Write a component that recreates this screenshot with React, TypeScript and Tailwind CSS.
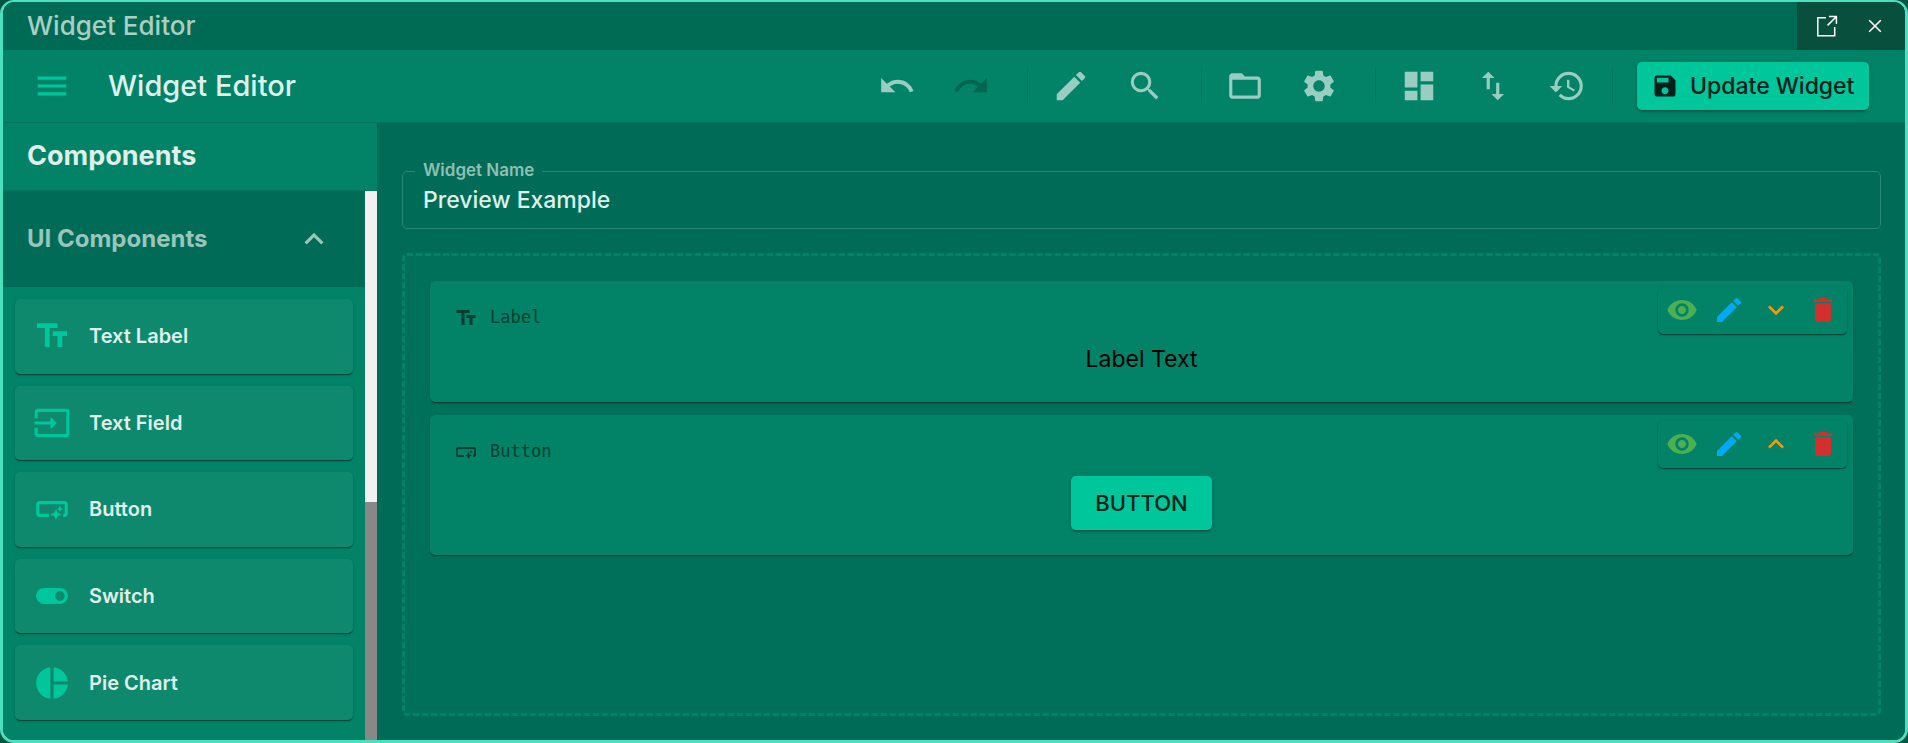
import type { ReactNode } from "react";
import type { IconType } from "react-icons";
import {
  MdDashboard,
  MdDelete,
  MdEdit,
  MdExpandLess,
  MdExpandMore,
  MdFolderOpen,
  MdHistory,
  MdInput,
  MdMenu,
  MdPieChart,
  MdRedo,
  MdSave,
  MdSearch,
  MdSettings,
  MdSmartButton,
  MdSwapVert,
  MdTextFields,
  MdToggleOn,
  MdUndo,
  MdVisibility,
} from "react-icons/md";

const raised = "shadow-[0_2px_1px_-1px_rgba(0,0,0,0.3),0_1px_1px_rgba(0,0,0,0.2),0_1px_3px_rgba(0,0,0,0.16)]";

const palette: { label: string; icon: IconType }[] = [
  { label: "Text Label", icon: MdTextFields },
  { label: "Text Field", icon: MdInput },
  { label: "Button", icon: MdSmartButton },
  { label: "Switch", icon: MdToggleOn },
  { label: "Pie Chart", icon: MdPieChart },
];

function TitleBar() {
  return (
    <header className="flex h-12 shrink-0 items-center justify-between bg-[#006b54] pl-6">
      <span className="text-[26px] leading-8 font-medium text-[#a9cfc3]">Widget Editor</span>
      <div className="flex h-full items-center gap-3 bg-[#084f3d] pr-3 pl-3">
        <button type="button" aria-label="Open in new window" className="flex size-9 items-center justify-center text-white">
          <svg viewBox="0 0 22 22" className="size-[22px]" fill="none" stroke="currentColor" strokeWidth="1.5">
            <path d="M10 2.8H1.8V20.8H18.7V12" />
            <path d="M13 1.6H20.4V9M20.2 1.8L11.6 10.4" />
          </svg>
        </button>
        <button type="button" aria-label="Close" className="flex size-9 items-center justify-center text-white">
          <svg viewBox="0 0 14 14" className="size-[14px]" fill="none" stroke="currentColor" strokeWidth="1.6">
            <path d="M1.2 1.2L12.8 12.8M12.8 1.2L1.2 12.8" />
          </svg>
        </button>
      </div>
    </header>
  );
}

function ToolButton({ label, icon: Icon, disabled = false }: { label: string; icon: IconType; disabled?: boolean }) {
  return (
    <button
      type="button"
      aria-label={label}
      disabled={disabled}
      className="flex size-[62px] items-center justify-center text-[#99cdc1] disabled:text-[#01664f]"
    >
      <Icon className="size-[38px]" />
    </button>
  );
}

function Toolbar() {
  return (
    <div className="flex h-[73px] shrink-0 items-center border-b border-[#01755d] bg-[#028368] pr-9 pl-[21px]">
      <button type="button" aria-label="Menu" className="flex size-[56px] items-center justify-center text-[#00c69c]">
        <MdMenu className="size-[38px]" />
      </button>
      <h1 className="ml-7 flex-1 text-[29px] leading-9 font-medium text-[#dff0eb]">Widget Editor</h1>
      <div className="flex items-center gap-3">
        <ToolButton label="Undo" icon={MdUndo} />
        <ToolButton label="Redo" icon={MdRedo} disabled />
        <span className="ml-[13px] h-9 w-px bg-[#01755d]" />
        <ToolButton label="Edit" icon={MdEdit} />
        <ToolButton label="Search" icon={MdSearch} />
        <span className="ml-[13px] h-9 w-px bg-[#01755d]" />
        <ToolButton label="Open" icon={MdFolderOpen} />
        <ToolButton label="Settings" icon={MdSettings} />
        <span className="ml-[13px] h-9 w-px bg-[#01755d]" />
        <ToolButton label="Dashboard" icon={MdDashboard} />
        <ToolButton label="Import and export" icon={MdSwapVert} />
        <ToolButton label="History" icon={MdHistory} />
        <span className="mr-3 ml-0.5 h-9 w-px bg-[#01755d]" />
        <button
          type="button"
          className="flex h-12 w-[232px] items-center gap-[11px] rounded-[5px] bg-[#00c69c] pl-[14px] text-[23px] font-medium whitespace-nowrap text-[#04201a] shadow-[0_3px_1px_-2px_rgba(0,0,0,0.2),0_2px_2px_rgba(0,0,0,0.14),0_1px_5px_rgba(0,0,0,0.12)]"
        >
          <MdSave className="size-7 shrink-0" />
          Update Widget
        </button>
      </div>
    </div>
  );
}

function Sidebar() {
  return (
    <aside className="flex w-[374px] shrink-0 flex-col bg-[#028368]">
      <h2 className="flex h-[68px] shrink-0 items-center border-b border-[#01755d] pl-6 text-[27px] font-bold text-[#dff0eb]">
        Components
      </h2>
      <div className="flex min-h-0 flex-1">
        <div className="min-w-0 flex-1 overflow-hidden">
          <button
            type="button"
            aria-expanded="true"
            className="flex h-24 w-full items-center justify-between bg-[#006c57] pr-8 pl-6 text-[24px] font-bold text-[#99c5ba]"
          >
            UI Components
            <MdExpandLess className="size-[38px]" />
          </button>
          <ul className="grid min-h-[445px] auto-rows-fr gap-3 p-3">
            {palette.map(({ label, icon: Icon }) => (
              <li
                key={label}
                className={`flex items-center gap-[18px] rounded-[5px] bg-[#0f896e] pl-[18px] ${raised}`}
              >
                <Icon className="size-[38px] text-[#00c69c]" />
                <span className="text-[20px] font-semibold text-[#dff0eb]">{label}</span>
              </li>
            ))}
          </ul>
        </div>
        <div className="flex w-3 flex-col bg-[#f1f1f1]">
          <div className="flex-[311]" />
          <div className="flex-[238] bg-[#888888]" />
        </div>
      </div>
    </aside>
  );
}

function CanvasItem({
  name,
  icon: Icon,
  move,
  children,
}: {
  name: string;
  icon: IconType;
  move: "up" | "down";
  children: ReactNode;
}) {
  const MoveIcon = move === "up" ? MdExpandLess : MdExpandMore;
  return (
    <section className={`relative rounded-[5px] bg-[#028368] px-6 pt-[25px] pb-[25px] ${raised}`}>
      <div className="flex h-6 items-center gap-3 font-['DejaVu_Sans_Mono',monospace] text-[17px] text-[#013f30]">
        <Icon className="size-6" />
        {name}
      </div>
      <div className="mt-3 flex justify-center">{children}</div>
      <div className={`absolute top-[6px] right-[6px] flex h-[47px] w-[189px] items-center rounded-[5px] bg-[#028368] pb-0.5 ${raised}`}>
        <button type="button" aria-label="Toggle visibility" className="flex flex-1 justify-center text-[#4caf50]">
          <MdVisibility className="size-8" />
        </button>
        <button type="button" aria-label="Edit" className="flex flex-1 justify-center text-[#03a9f4]">
          <MdEdit className="size-8" />
        </button>
        <button type="button" aria-label={`Move ${move}`} className="flex flex-1 justify-center text-[#ff9800]">
          <MoveIcon className="size-8" />
        </button>
        <button type="button" aria-label="Delete" className="flex flex-1 justify-center text-[#d32f2f]">
          <MdDelete className="size-8" />
        </button>
      </div>
    </section>
  );
}

function Editor() {
  return (
    <main className="flex min-w-0 flex-1 flex-col gap-6 bg-[#006c57] pt-12 pr-6 pb-6 pl-[25px]">
      <div className="relative h-[58px] shrink-0 rounded-[5px] border border-[#2f8575]">
        <label
          htmlFor="widget-name"
          className="absolute -top-[14px] left-3 bg-[#006c57] px-2 text-[17px] leading-6 font-semibold text-[#8fbfb3]"
        >
          Widget Name
        </label>
        <input
          id="widget-name"
          defaultValue="Preview Example"
          className="h-full w-full bg-transparent px-5 text-[23px] font-medium text-[#dff0eb] outline-none"
        />
      </div>
      <div className="flex flex-1 flex-col gap-[13px] rounded-[5px] border-[3px] border-dashed border-[#028368] bg-[#00705b] px-[25px] pt-[25px]">
        <CanvasItem name="Label" icon={MdTextFields} move="down">
          <p className="text-[23px] leading-[35px] text-black">Label Text</p>
        </CanvasItem>
        <CanvasItem name="Button" icon={MdSmartButton} move="up">
          <button
            type="button"
            className="h-[54px] w-[141px] rounded-[5px] bg-[#00c69c] text-[22px] font-medium text-[#04201a] shadow-[0_3px_1px_-2px_rgba(0,0,0,0.2),0_2px_2px_rgba(0,0,0,0.14),0_1px_5px_rgba(0,0,0,0.12)]"
          >
            BUTTON
          </button>
        </CanvasItem>
      </div>
    </main>
  );
}

export default function App() {
  return (
    <div className="h-screen bg-[#075445] font-['Inter','Liberation_Sans',sans-serif]">
      <div className="flex h-full flex-col overflow-hidden rounded-[14px] border-[3px] border-t-2 border-[#4be0c0]">
        <TitleBar />
        <Toolbar />
        <div className="flex min-h-0 flex-1">
          <Sidebar />
          <Editor />
        </div>
      </div>
    </div>
  );
}
